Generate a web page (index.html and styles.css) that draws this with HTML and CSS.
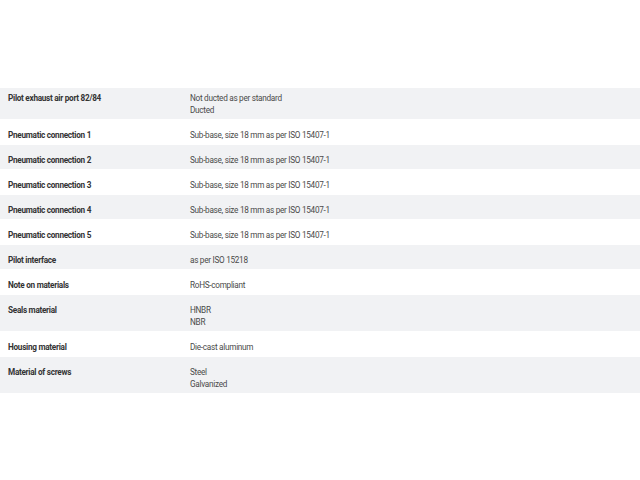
FILE: index.html
```html
<!DOCTYPE html>
<html lang="en">
<head>
    <meta charset="UTF-8">
    <meta name="viewport" content="width=device-width, initial-scale=1.0">
    <title>Technical data</title>
    <link rel="stylesheet" href="styles.css">
</head>
<body>
    <div class="specs">
        <div class="spec-row alt first">
            <div class="spec-label">Pilot exhaust air port 82/84</div>
            <div class="spec-value">Not ducted as per standard<br>Ducted</div>
        </div>
        <div class="spec-row">
            <div class="spec-label">Pneumatic connection 1</div>
            <div class="spec-value">Sub-base, size 18 mm as per ISO 15407-1</div>
        </div>
        <div class="spec-row alt">
            <div class="spec-label">Pneumatic connection 2</div>
            <div class="spec-value">Sub-base, size 18 mm as per ISO 15407-1</div>
        </div>
        <div class="spec-row">
            <div class="spec-label">Pneumatic connection 3</div>
            <div class="spec-value">Sub-base, size 18 mm as per ISO 15407-1</div>
        </div>
        <div class="spec-row alt">
            <div class="spec-label">Pneumatic connection 4</div>
            <div class="spec-value">Sub-base, size 18 mm as per ISO 15407-1</div>
        </div>
        <div class="spec-row">
            <div class="spec-label">Pneumatic connection 5</div>
            <div class="spec-value">Sub-base, size 18 mm as per ISO 15407-1</div>
        </div>
        <div class="spec-row alt">
            <div class="spec-label">Pilot interface</div>
            <div class="spec-value">as per ISO 15218</div>
        </div>
        <div class="spec-row">
            <div class="spec-label">Note on materials</div>
            <div class="spec-value">RoHS-compliant</div>
        </div>
        <div class="spec-row alt">
            <div class="spec-label">Seals material</div>
            <div class="spec-value">HNBR<br>NBR</div>
        </div>
        <div class="spec-row">
            <div class="spec-label">Housing material</div>
            <div class="spec-value">Die-cast aluminum</div>
        </div>
        <div class="spec-row alt">
            <div class="spec-label">Material of screws</div>
            <div class="spec-value">Steel<br>Galvanized</div>
        </div>
    </div>
</body>
</html>
```

FILE: styles.css
```css
body {
    margin: 0;
    font-family: Roboto, "Liberation Sans", sans-serif;
    font-size: 8.2px;
    line-height: 12px;
    letter-spacing: -0.28px;
    background: #fff;
}

.specs {
    margin-top: 88px;
}

.spec-row {
    display: grid;
    grid-template-columns: 182px 1fr;
    padding: 9px 8px 3px;
    border-top: 1px solid #fff;
}

.spec-row.alt {
    background-color: #f1f2f4;
}

.spec-row.first {
    padding-top: 4px;
    border-top: none;
}

.spec-label {
    font-weight: bold;
    color: #333;
}

.spec-value {
    color: #4a4a4a;
}
```
